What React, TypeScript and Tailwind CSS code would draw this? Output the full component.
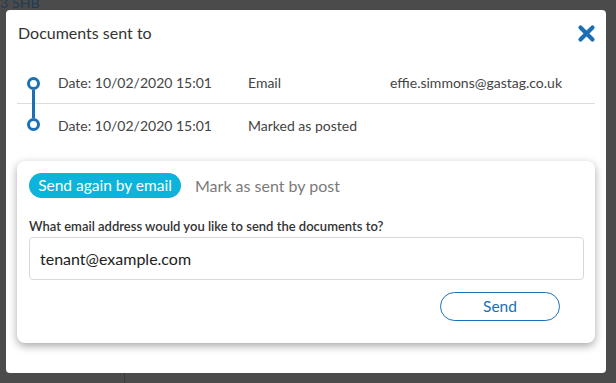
import React from 'react';

interface SentRecord {
  date: string;
  method: string;
  recipient: string;
}

const records: SentRecord[] = [
  { date: '10/02/2020 15:01', method: 'Email', recipient: 'effie.simmons@gastag.co.uk' },
  { date: '10/02/2020 15:01', method: 'Marked as posted', recipient: '' },
];

const CloseIcon = () => (
  <svg width="19" height="19" viewBox="0 0 19 19" className="text-[#1a6fb5]">
    <path d="M3.5 3.5 L15.5 15.5 M15.5 3.5 L3.5 15.5" stroke="currentColor" strokeWidth="4.2" strokeLinecap="round" />
  </svg>
);

// the timeline marker: a ring with the connecting bar above and/or below it
const Marker = ({ first, last }: { first: boolean; last: boolean }) => (
  <div className="flex h-full w-[41px] flex-col items-start pl-[10px]">
    <div className={`ml-[5px] w-[3px] flex-1 ${first ? '' : 'relative -mt-px bg-[#1a6fb5]'}`} />
    <div className="h-[13px] w-[13px] shrink-0 rounded-full border-[3px] border-[#1a6fb5] bg-white" />
    <div className={`ml-[5px] w-[3px] flex-1 ${last ? '' : 'relative -mb-px bg-[#1a6fb5]'}`} />
  </div>
);

export default function App() {
  return (
    <div className="relative h-[383px] w-[616px] overflow-hidden bg-[#4b4b4b] font-['Lato',sans-serif]">
      {/* page behind the overlay */}
      <div className="absolute left-0 top-[-5px] text-[14px] leading-[16px] text-[#1f3b55]">3 5HB</div>
      <div className="absolute inset-x-0 bottom-0 flex h-[10px]">
        <div className="w-[125px] border-r border-[#3a3a3a]" />
      </div>

      <div className="relative pl-[6px] pt-[10px]">
        <div className="h-[363px] w-[600px] rounded-[4px] bg-white">
          <div className="flex h-[46px] items-center justify-between pl-[12px] pr-[10px]">
            <h2 className="text-[16px] text-[#333]">Documents sent to</h2>
            <CloseIcon />
          </div>

          <div className="mx-[11px] mt-[6px]">
            {records.map((r, i) => (
              <div
                key={i}
                className={`flex h-[42px] items-center text-[14px] text-[#444] ${i === 0 ? 'border-b border-[#dcdcdc]' : ''}`}
              >
                <Marker first={i === 0} last={i === records.length - 1} />
                <span className="w-[190px]">Date: {r.date}</span>
                <span className="w-[142px]">{r.method}</span>
                <span>{r.recipient}</span>
              </div>
            ))}
          </div>

          <div className="mx-[11px] mt-[15px] h-[182px] rounded-[8px] bg-white px-[12px] pt-[12px] shadow-[0_3px_8px_rgba(0,0,0,0.35)]">
            <div className="flex items-center gap-[14px]">
              <button className="h-[25px] w-[152px] rounded-full bg-[#0cb4db] text-[15.5px] text-white">
                Send again by email
              </button>
              <span className="text-[16px] text-[#7a7a7a]">Mark as sent by post</span>
            </div>

            <label className="mt-[19px] block text-[13px] leading-[18px] font-semibold text-[#333]">
              What email address would you like to send the documents to?
            </label>
            <div className="mt-[2px] flex h-[43px] w-[555px] items-center rounded-[4px] border border-[#d9d9d9] px-[10px] text-[16px] text-[#222]">
              tenant@example.com
            </div>

            <div className="mt-[12px] flex w-[555px] justify-end pr-[24px]">
              <button className="h-[29px] w-[120px] rounded-full border border-[#1a6fb5] text-[15.5px] text-[#1a6fb5]">
                Send
              </button>
            </div>
          </div>
        </div>
      </div>
    </div>
  );
}
